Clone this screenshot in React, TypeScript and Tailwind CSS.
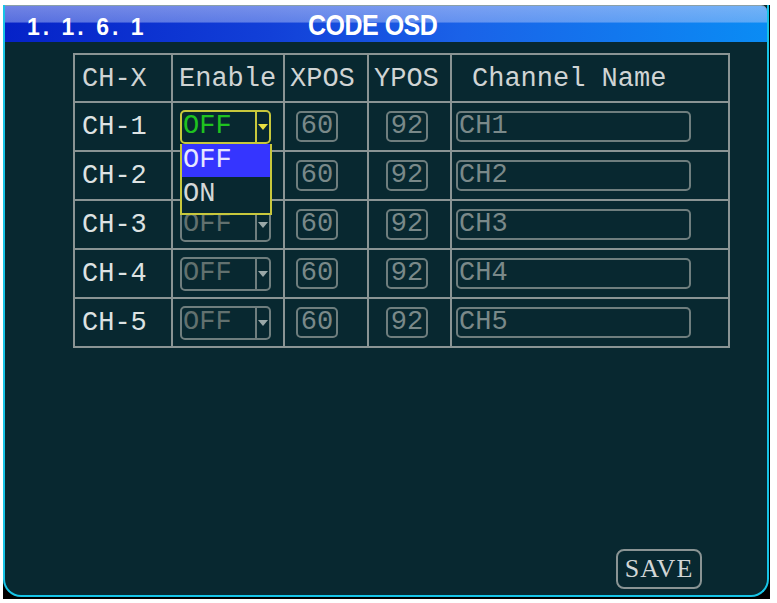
import React from 'react';

const mono = { fontFamily: '"Liberation Mono", "DejaVu Sans Mono", monospace' };

const rows = [
  { ch: 'CH-1', name: 'CH1', focus: true },
  { ch: 'CH-2', name: 'CH2' },
  { ch: 'CH-3', name: 'CH3' },
  { ch: 'CH-4', name: 'CH4' },
  { ch: 'CH-5', name: 'CH5' },
];

function Arrow({ color }: { color: string }) {
  return (
    <svg width="10" height="6" viewBox="0 0 10 6">
      <polygon points="0,0 10,0 5,6" fill={color} />
    </svg>
  );
}

function EnableSelect({ focus }: { focus?: boolean }) {
  const border = focus ? 'border-[#c8c83c]' : 'border-[#6f7e7e]';
  return (
    <div className="relative ml-[7px]">
      <div className={`flex h-[34px] w-[91px] items-stretch rounded-[5px] border-2 ${border}`}>
        <div className={`flex flex-1 items-center pl-[1px] text-[27px] leading-none ${focus ? 'text-[#1fc21f]' : 'text-[#62716f]'}`}>
          OFF
        </div>
        <div className={`flex w-[14px] items-center justify-center border-l-2 ${border}`}>
          <Arrow color={focus ? '#e8e040' : '#9aa8a8'} />
        </div>
      </div>
      {focus && (
        <div className="absolute left-0 top-[34px] z-10 w-[92px] border-2 border-t-0 border-[#c8c83c] bg-[#082830]">
          <div className="flex h-[33px] items-center bg-[#3535ff] pl-[1px] text-[27px] leading-none text-[#e6e6ff]">OFF</div>
          <div className="flex h-[36px] items-center pl-[1px] text-[27px] leading-none text-[#d4d8d8]">ON</div>
        </div>
      )}
    </div>
  );
}

function ValBox({ value, w, ml }: { value: string; w: string; ml: string }) {
  return (
    <div className={`flex h-[31px] items-center rounded-[5px] border-2 border-[#6f7e7e] text-[27px] leading-none text-[#7a8989] ${w} ${ml}`}>
      {value}
    </div>
  );
}

export default function App() {
  return (
    <div className="h-[603px] w-[777px] bg-white pl-[3px] pt-[5px]" style={mono}>
      <div className="h-[594px] w-[767px] bg-black pb-[2px] pr-[1px]">
        <div className="flex h-full flex-col overflow-hidden rounded-b-[18px] border-x-2 border-b-2 border-[#17c4e6] bg-[#082830]">
          {/* Title bar */}
          <div className="relative flex h-[37px] shrink-0 items-end rounded-tr-[6px] border-t border-[#8aa0a8] bg-[linear-gradient(to_bottom,rgba(200,210,250,0.55)_0%,rgba(190,205,250,0.45)_44%,rgba(0,0,0,0)_48%),linear-gradient(to_right,#0522c8_0%,#1240d8_35%,#1a62e8_60%,#0a8cf4_100%)]">
            <span
              className="mb-[3px] ml-[22px] text-[23px] font-bold leading-none tracking-[3px] text-white"
              style={{ fontFamily: '"Liberation Sans", Arial, sans-serif' }}
            >
              1. 1. 6. 1
            </span>
            <span
              className="absolute left-[303px] top-[6px] inline-block scale-y-[1.2] text-[25px] font-bold leading-none tracking-[-0.5px] text-white"
              style={{ fontFamily: '"Liberation Sans", Arial, sans-serif' }}
            >
              CODE OSD
            </span>
          </div>

          {/* Table */}
          <div className="ml-[68px] mt-[11px] grid w-[657px] grid-cols-[96px_110px_82px_81px_276px] grid-rows-[46px_47px_47px_47px_47px_47px] gap-[2px] bg-[#8a9494] p-[2px]">
            <div className="flex items-center bg-[#082830] pl-[7px] pt-[2px] text-[27px] leading-none text-[#d0d4d4]">CH-X</div>
            <div className="flex items-center bg-[#082830] pl-[6px] pt-[2px] text-[27px] leading-none text-[#d0d4d4]">Enable</div>
            <div className="flex items-center bg-[#082830] pl-[5px] pt-[2px] text-[27px] leading-none text-[#d0d4d4]">XPOS</div>
            <div className="flex items-center bg-[#082830] pl-[5px] pt-[2px] text-[27px] leading-none text-[#d0d4d4]">YPOS</div>
            <div className="flex items-center bg-[#082830] pl-[20px] pt-[2px] text-[27px] leading-none text-[#d0d4d4]">Channel Name</div>
            {rows.map(r => (
              <React.Fragment key={r.ch}>
                <div className="flex items-center bg-[#082830] pl-[7px] pt-[2px] text-[27px] leading-none text-[#dde2e2]">{r.ch}</div>
                <div className="relative flex items-center bg-[#082830]">
                  <EnableSelect focus={r.focus} />
                </div>
                <div className="flex items-center bg-[#082830]">
                  <ValBox value="60" w="w-[42px] justify-center" ml="ml-[11px]" />
                </div>
                <div className="flex items-center bg-[#082830]">
                  <ValBox value="92" w="w-[42px] justify-center" ml="ml-[17px]" />
                </div>
                <div className="flex items-center bg-[#082830]">
                  <ValBox value={r.name} w="w-[235px] pl-[1px]" ml="ml-[4px]" />
                </div>
              </React.Fragment>
            ))}
          </div>

          <div className="flex-1" />

          {/* Save */}
          <div className="mb-[6px] flex justify-end pr-[65px]">
            <div
              className="flex h-[40px] w-[86px] items-center justify-center rounded-[8px] border-2 border-[#8a9494] text-[26px] leading-none tracking-[1px] text-[#d2d6d6]"
              style={{ fontFamily: '"Liberation Serif", "Times New Roman", serif' }}
            >
              SAVE
            </div>
          </div>
        </div>
      </div>
    </div>
  );
}
